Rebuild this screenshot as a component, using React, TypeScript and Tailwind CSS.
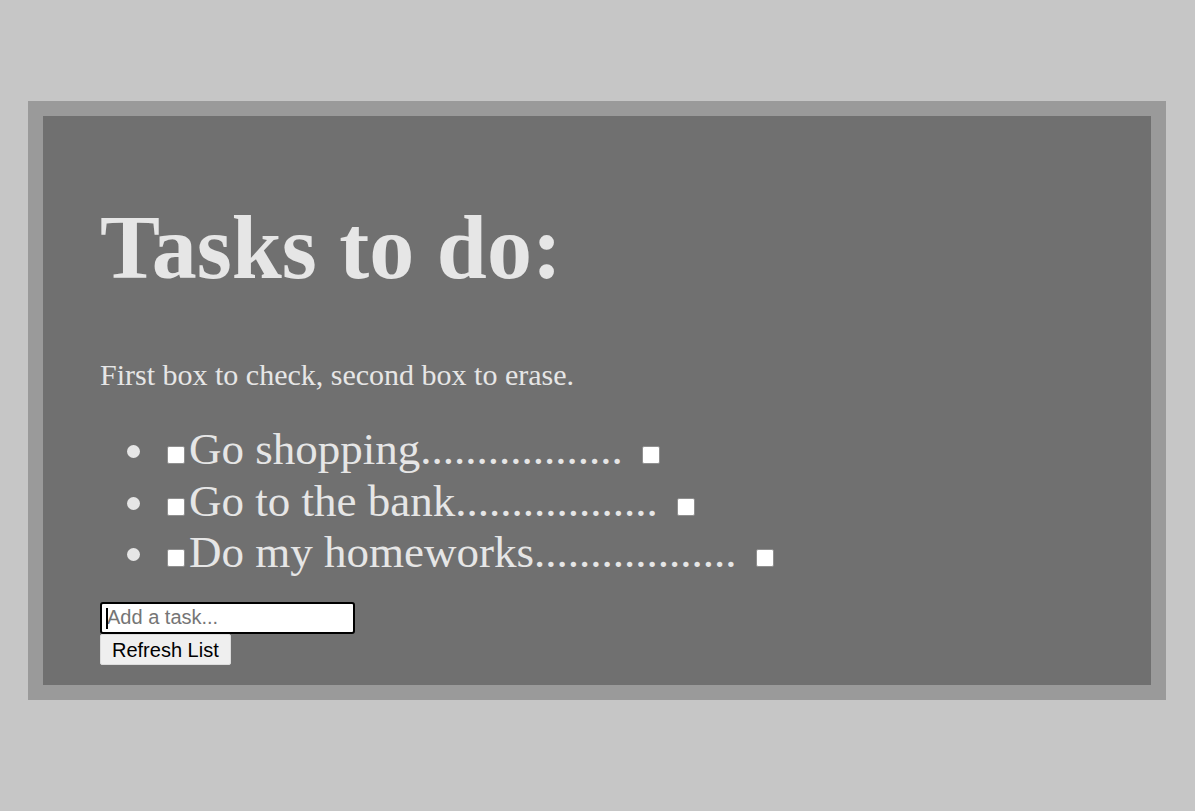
import { useState } from "react";

export default function App() {
  const [tasks] = useState([
    "Go shopping",
    "Go to the bank",
    "Do my homeworks",
  ]);

  return (
    <div className="min-h-[811px] w-full bg-[#c6c6c6] pt-[101px]">
      {/* Outer frame */}
      <div className="ml-[28px] w-[1138px] border-[15px] border-[#9a9a9a] bg-[#707070] px-[57px] pt-[22px] pb-[20px] text-[#e6e6e6] font-['Liberation_Serif',serif]">
        <h1 className="mt-[58px] mb-[59px] text-[90px] font-bold leading-[1.149]">
          Tasks to do:
        </h1>

        <p className="text-[30px] leading-[1.149]">
          First box to check, second box to erase.
        </p>

        <ul className="mt-[31px] list-disc pl-[60px] text-[45px] leading-[1.149]">
          {tasks.map((task, i) => (
            <li key={i}>
              <span className="ml-[7px] mr-[4px] inline-block h-[18px] w-[18px] rounded-[2px] border border-[#8f8f8f] bg-white align-baseline" />
              {task}
              ..................{" "}
              <span className="ml-[8px] inline-block h-[18px] w-[18px] rounded-[2px] border border-[#8f8f8f] bg-white align-baseline" />
            </li>
          ))}
        </ul>

        {/* Add task form */}
        <div className="mt-[23px] flex flex-col items-start font-['Liberation_Sans',Arial,sans-serif]">
          <div className="relative">
            <input
              type="text"
              placeholder="Add a task..."
              className="h-[32px] w-[255px] rounded-[3px] border-2 border-black bg-white px-[5px] text-[20px] text-black outline-none placeholder:text-[#757575]"
            />
            <span className="absolute left-[6px] top-[6px] h-[21px] w-[2px] bg-black" />
          </div>
          <button className="h-[31px] rounded-[2px] border border-[#dcdcdc] bg-[#efefef] px-[11px] text-[20px] text-black">
            Refresh List
          </button>
        </div>
      </div>
    </div>
  );
}
